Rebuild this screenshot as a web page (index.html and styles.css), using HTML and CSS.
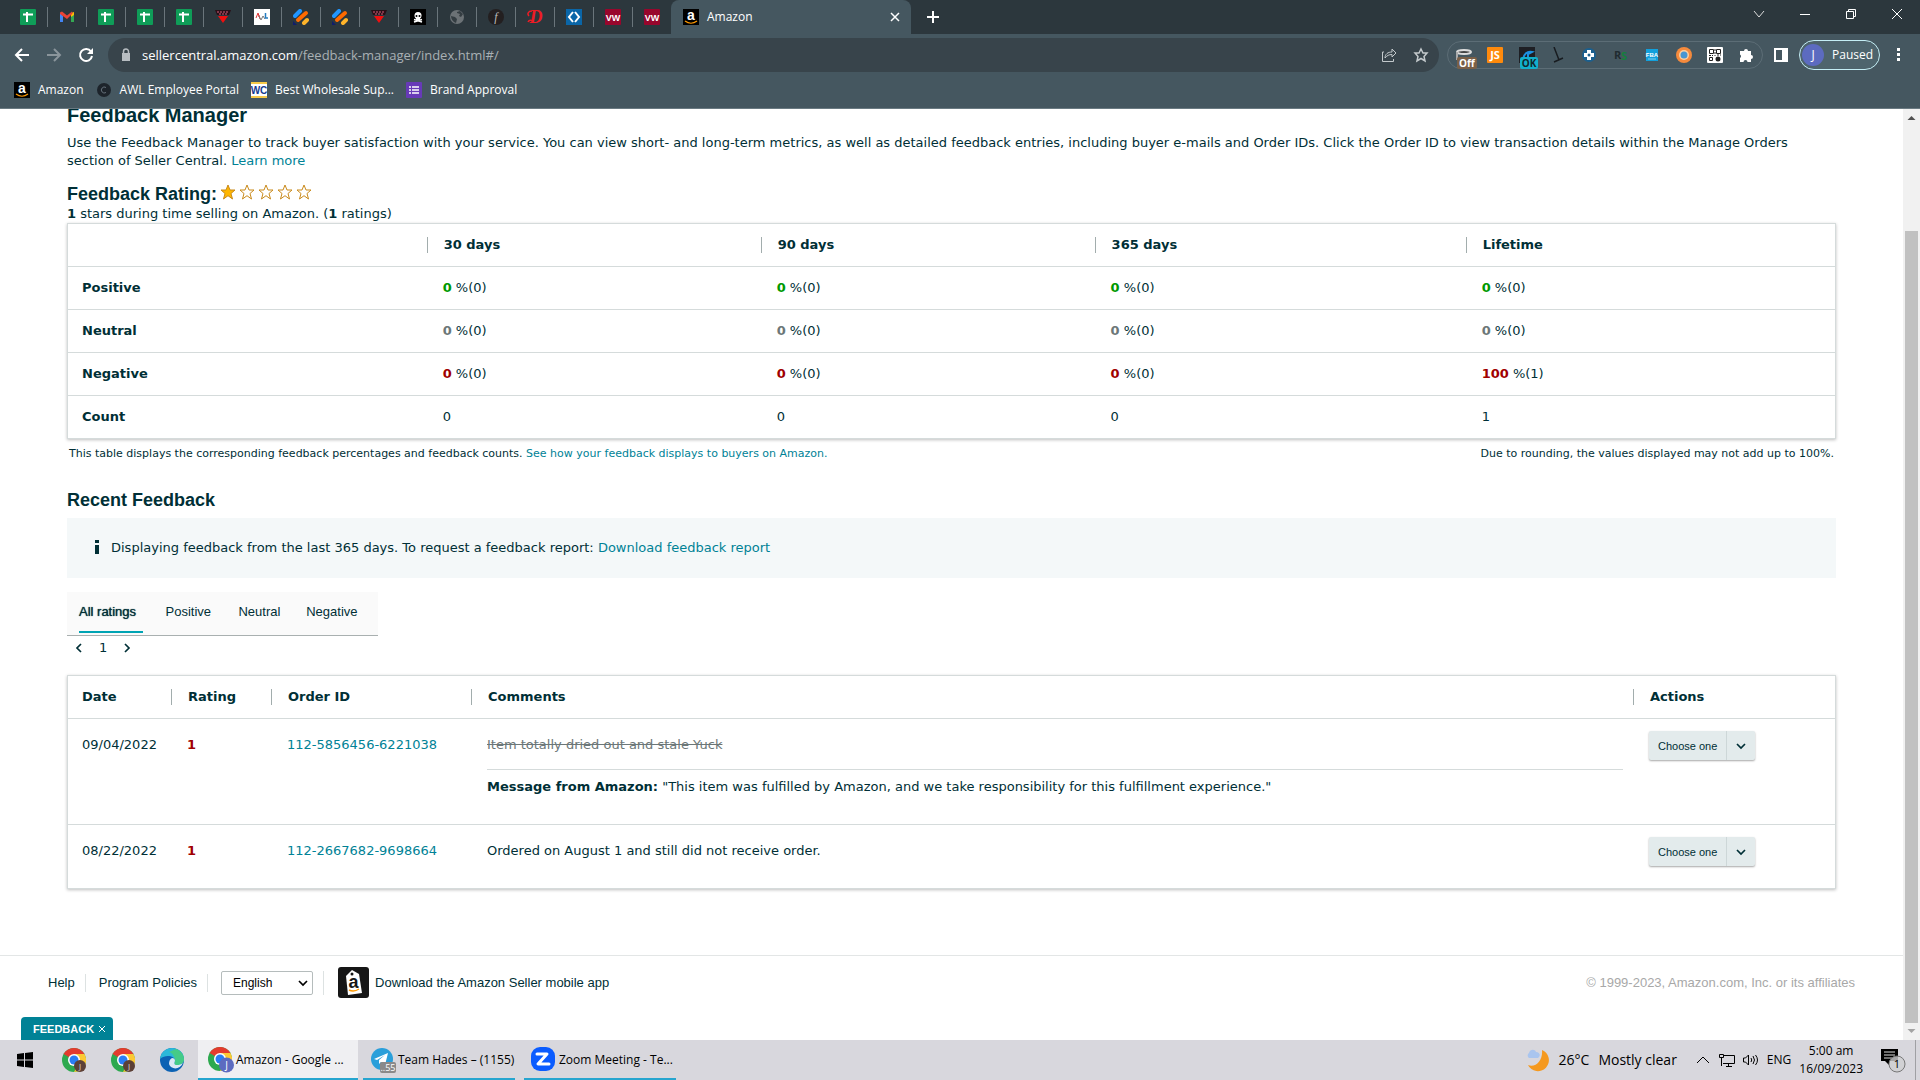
FILE: index.html
```html
<!DOCTYPE html>
<html lang="en">
<head>
  <meta charset="UTF-8" />
  <meta name="viewport" content="width=device-width, initial-scale=1.0" />
  <title>Amazon</title>
  <link rel="stylesheet" href="styles.css">
</head>
<body>
  <!-- shared icons -->
  <svg class="defs" aria-hidden="true">
    <symbol id="sheet" viewBox="0 0 16 16"><rect width="16" height="16" rx="1" fill="#0f9d58"/><path d="M3 5.500h10M7 3v10" stroke="#fff" stroke-width="2"/></symbol>
    <symbol id="vred" viewBox="0 0 16 16"><path d="M0 1h16l-2 5H2z" fill="#281018"/><path d="M2 3h12M4 5h8" stroke="#d85c78" stroke-dasharray="2 1"/><path d="M3 7h10l-5 7z" fill="#f01010"/></symbol>
    <symbol id="stripes" viewBox="0 0 16 16"><path d="M2 7l5-5" stroke="#2196ff" stroke-width="4" stroke-linecap="round"/><path d="M5 11l8-7" stroke="#ff6a00" stroke-width="4" stroke-linecap="round"/><path d="M11 14l3-3" stroke="#ffb42a" stroke-width="4" stroke-linecap="round"/><path d="M0 12l4 4H0z" fill="#101d6b"/></symbol>
    <symbol id="chrome" viewBox="0 0 24 24"><circle cx="12" cy="12" r="12" fill="#2da94f"/><path d="M12 12L1.600 6A12 12 0 0 1 22.400 6z" fill="#e33b2e"/><path d="M22.400 6A12 12 0 0 1 12 24l5-9-5-9z" fill="#fcc934"/><circle cx="12" cy="12" r="6" fill="#fff"/><circle cx="12" cy="12" r="4.500" fill="#2a7df4"/></symbol>
    <symbol id="star" viewBox="0 0 16 16"><path d="M8 1l2 5h5l-4 3.500L12.500 15 8 11.700 3.500 15 5 9.500 1 6h5z" stroke="#c98a1b"/></symbol>
    <symbol id="chev" viewBox="0 0 10 10"><path d="M1 3l4 4 4-4" fill="none" stroke="currentColor" stroke-width="1.700"/></symbol>
  </svg>

  <header class="browser">
    <div class="tabstrip">
      <div class="pinned">
        <span class="pin"><svg><use href="#sheet"/></svg></span>
        <span class="pin"><svg viewBox="0 0 16 16"><path d="M1 4v9h3V7z" fill="#4285f4"/><path d="M15 4v9h-3V7z" fill="#34a853"/><path d="M12 4l3-1v3l-3 2z" fill="#fbbc04"/><path d="M1 3.500l2-1 5 4 5-4 .5 2L8 10 1 5z" fill="#ea4335"/></svg></span>
        <span class="pin"><svg><use href="#sheet"/></svg></span>
        <span class="pin"><svg><use href="#sheet"/></svg></span>
        <span class="pin"><svg><use href="#sheet"/></svg></span>
        <span class="pin"><svg><use href="#vred"/></svg></span>
        <span class="pin"><svg viewBox="0 0 16 16"><rect width="16" height="16" fill="#fff"/><path d="M2 9l2-5 2 6M4 7h2" stroke="#d33" fill="none"/><path d="M5 7l2 4 2-4 2 3" stroke="#777" fill="none"/><path d="M11.500 4v5H14" stroke="#247cc0" stroke-width="1.500" fill="none"/></svg></span>
        <span class="pin"><svg><use href="#stripes"/></svg></span>
        <span class="pin"><svg><use href="#stripes"/></svg></span>
        <span class="pin"><svg><use href="#vred"/></svg></span>
        <span class="pin"><svg viewBox="0 0 16 16"><rect width="16" height="16" fill="#000"/><circle cx="8" cy="6.500" r="3.500" fill="#fff"/><path d="M6 8h4v3H6z" fill="#fff"/><path d="M4 10.500l8 2.500M12 10.500L4 13" stroke="#fff" stroke-width="1.500"/><circle cx="6.500" cy="7" r="1"/><circle cx="9.500" cy="7" r="1"/></svg></span>
        <span class="pin"><svg viewBox="0 0 16 16"><circle cx="8" cy="8" r="7" fill="#6c7276"/><path d="M2 7l4 1 2 2-1 4c-3-1-5-4-5-7zM8 3l3-1 3 3-2 3-2-1 1-2-3-1z" fill="#343d42"/></svg></span>
        <span class="pin"><svg viewBox="0 0 16 16"><circle cx="8" cy="8" r="8" fill="#231f20"/><text x="8" y="12" text-anchor="middle" font-family="Liberation Serif, serif" font-style="italic" font-size="12" fill="#bbb">f</text></svg></span>
        <span class="pin"><svg viewBox="0 0 16 16"><text x="9" y="14" text-anchor="middle" font-family="Liberation Serif, serif" font-style="italic" font-weight="700" font-size="18" fill="#ee1c25">D</text><path d="M5 2C1 2 0 5 2 7M1 13c1-2 3-2 5-1" stroke="#ee1c25" stroke-width="1.500" fill="none"/></svg></span>
        <span class="pin"><svg viewBox="0 0 16 16"><rect width="16" height="16" fill="#0a66a8"/><path d="M7 3L3 8l4 5M9 3l4 5-4 5" stroke="#fff" stroke-width="2" fill="none"/></svg></span>
        <span class="pin"><svg viewBox="0 0 16 16"><rect width="16" height="16" rx="1" fill="#98062c"/><text x="8" y="12" text-anchor="middle" font-family="Liberation Sans, sans-serif" font-weight="700" font-size="9" fill="#fff">VW</text></svg></span>
        <span class="pin"><svg viewBox="0 0 16 16"><rect width="16" height="16" rx="1" fill="#98062c"/><text x="8" y="12" text-anchor="middle" font-family="Liberation Sans, sans-serif" font-weight="700" font-size="9" fill="#fff">VW</text></svg></span>
      </div>
      <div class="tab">
        <svg viewBox="0 0 16 16"><rect width="16" height="16" fill="#000"/><text x="8" y="11" text-anchor="middle" font-family="Liberation Sans, sans-serif" font-weight="700" font-size="14" fill="#fff">a</text><path d="M2 12c4 3 8 3 12 0" stroke="#ff9900" stroke-width="1.200" fill="none"/></svg>
        <span class="tab-title">Amazon</span>
        <button class="icon-btn" aria-label="Close tab"><svg viewBox="0 0 16 16"><path d="M4 4l8 8M12 4l-8 8" stroke="#fff" stroke-width="1.500"/></svg></button>
      </div>
      <button class="icon-btn new-tab" aria-label="New tab"><svg viewBox="0 0 16 16"><path d="M8 2v12M2 8h12" stroke="#fff" stroke-width="2"/></svg></button>
      <div class="window-controls">
        <button class="icon-btn" aria-label="Search tabs"><svg viewBox="0 0 16 16"><path d="M3 5l5 6 5-6" stroke="#ddd" fill="none"/></svg></button>
        <button class="icon-btn" aria-label="Minimize"><svg viewBox="0 0 16 16"><path d="M3 8.500h10" stroke="#fff"/></svg></button>
        <button class="icon-btn" aria-label="Restore"><svg viewBox="0 0 16 16"><path d="M3.500 5.500h7v7h-7zM5.500 5V3.500h7v7H11" stroke="#fff" fill="none"/></svg></button>
        <button class="icon-btn" aria-label="Close"><svg viewBox="0 0 16 16"><path d="M3 3l10 10M13 3L3 13" stroke="#fff"/></svg></button>
      </div>
    </div>

    <div class="toolbar">
      <div class="nav">
        <button class="icon-btn" aria-label="Back"><svg viewBox="0 0 16 16"><path d="M15 8H2M8 2L2 8l6 6" stroke="#fff" stroke-width="2" fill="none"/></svg></button>
        <button class="icon-btn" aria-label="Forward"><svg viewBox="0 0 16 16"><path d="M1 8h13M8 2l6 6-6 6" stroke="#8a959b" stroke-width="2" fill="none"/></svg></button>
        <button class="icon-btn" aria-label="Reload"><svg viewBox="0 0 16 16"><path d="M13 4.500A6 6 0 1 0 14 9" stroke="#fff" stroke-width="2" fill="none"/><path d="M15 1v6H9z" fill="#fff"/></svg></button>
      </div>
      <div class="omnibox">
        <svg viewBox="0 0 16 16"><path d="M4 6h8v8H4z" fill="#b7bdc1"/><path d="M5.500 7V4.500a2.500 2.500 0 0 1 5 0V7" stroke="#b7bdc1" fill="none" stroke-width="1.500"/></svg>
        <span class="url">sellercentral.amazon.com<span class="path">/feedback-manager/index.html#/</span></span>
        <button class="icon-btn" aria-label="Share"><svg viewBox="0 0 16 16"><path d="M3 5H1.500v9.500h11V12M4 11c0-4 3-6 7-6V2l4 4-4 4V7.500C8 7.500 6 8.500 4 11z" stroke="#c3c9cc" fill="none"/></svg></button>
        <button class="icon-btn" aria-label="Bookmark"><svg viewBox="0 0 16 16"><path d="M8 2l2 4h4l-3 3.500 1 4.500-4-2.500L4 14l1-4.500L2 6h4z" stroke="#c3c9cc" stroke-width="1.500" fill="none"/></svg></button>
      </div>
      <div class="extensions">
        <span class="ext"><svg viewBox="0 0 16 16"><ellipse cx="8" cy="5" rx="7" ry="2" stroke="#ddd" stroke-width="2" fill="#444"/><path d="M1 5v8" stroke="#aaa" stroke-width="2"/></svg><b class="badge badge-off">Off</b></span>
        <span class="ext"><svg viewBox="0 0 16 16"><rect width="16" height="16" rx="1" fill="#ff8a0c"/><text x="8" y="12" text-anchor="middle" font-family="Open Sans, sans-serif" font-weight="700" font-size="11" fill="#fff">JS</text></svg></span>
        <span class="ext"><svg viewBox="0 0 16 16"><rect width="16" height="16" fill="#1e1f24"/><path d="M4 12c1-5 4-8 9-7l-4 2v3" stroke="#1d8fe0" stroke-width="2" fill="none"/></svg><b class="badge badge-ok">OK</b></span>
        <span class="ext"><svg viewBox="0 0 16 16"><path d="M4 0l5 13M4 15l9-4" stroke="#181c20" stroke-width="1.500"/></svg></span>
        <span class="ext"><svg viewBox="0 0 16 16"><circle cx="8" cy="8" r="7" fill="#1b5f8e"/><path d="M8 3v10M3 8h10" stroke="#fff" stroke-width="4"/><circle cx="8" cy="8" r="1.500" fill="#1b5f8e"/></svg></span>
        <span class="ext"><svg viewBox="0 0 16 16"><text x="1" y="12" font-family="Open Sans, sans-serif" font-weight="700" font-size="11" fill="#202b30">R</text><text x="8" y="13" font-family="Open Sans, sans-serif" font-weight="700" font-size="11" fill="#14803c">S</text></svg></span>
        <span class="ext"><svg viewBox="0 0 16 16"><path d="M2 2h12v12H2z" fill="#12a0dc"/><text x="8" y="10" text-anchor="middle" font-family="Liberation Sans, sans-serif" font-weight="700" font-size="6" fill="#fff">FBA</text><path d="M4 12h8" stroke="#7fd0f0"/></svg></span>
        <span class="ext"><svg viewBox="0 0 16 16"><circle cx="8" cy="8" r="8" fill="#f58a3c"/><circle cx="8" cy="8" r="5" fill="#fbd0a2"/><circle cx="8" cy="8" r="3.500" fill="#4796d2"/></svg></span>
        <span class="ext"><svg viewBox="0 0 16 16"><rect width="16" height="16" rx="1" fill="#fff"/><path d="M2.500 2.500h4v4h-4zM9.500 2.500h4v4h-4zM2.500 10.500h3v3h-3z" stroke="#222" fill="none"/><path d="M8 2v7M2 8.500h4M10 8h4" stroke="#222" stroke-dasharray="2 1"/><circle cx="11" cy="12" r="2.500" fill="#222"/></svg></span>
        <span class="ext"><svg viewBox="0 0 16 16"><path d="M2 4h4a2 2 0 0 1 4 0h3v4a2 2 0 0 1 0 4v3H9.500a2 2 0 0 0-4 0H2v-4a2 2 0 0 0 0-3.500z" fill="#fff"/></svg></span>
      </div>
      <button class="icon-btn side-panel" aria-label="Side panel"><svg viewBox="0 0 16 16"><path d="M1 1h14v14H1zM3 3v10h6V3z" fill="#fff" fill-rule="evenodd"/></svg></button>
      <button class="profile"><span class="avatar">J</span>Paused</button>
      <button class="icon-btn menu" aria-label="Menu"><svg viewBox="0 0 16 16"><path d="M7 1h3v3H7zM7 6h3v3H7zM7 11h3v3H7z" fill="#fff"/></svg></button>
    </div>

    <nav class="bookmarks">
      <a href="#"><svg viewBox="0 0 16 16"><rect width="16" height="16" fill="#000"/><text x="8" y="11" text-anchor="middle" font-family="Liberation Sans, sans-serif" font-weight="700" font-size="14" fill="#fff">a</text><path d="M2 12c4 3 8 3 12 0" stroke="#ff9900" stroke-width="1.200" fill="none"/></svg>Amazon</a>
      <a href="#"><svg viewBox="0 0 16 16"><circle cx="8" cy="8" r="7" fill="#1d242b"/><path d="M10 5.500a3 3 0 1 0 0 5" stroke="#65707a" fill="none"/></svg>AWL Employee Portal</a>
      <a href="#"><svg viewBox="0 0 16 16"><rect width="16" height="16" fill="#fff"/><path d="M0 1h16M0 15h16" stroke="#f7c948" stroke-width="2"/><text x="8" y="12" text-anchor="middle" font-family="Liberation Sans, sans-serif" font-weight="700" font-size="10" fill="#173a8f">WC</text></svg>Best Wholesale Sup...</a>
      <a href="#"><svg viewBox="0 0 16 16"><rect width="16" height="16" rx="1" fill="#673ab7"/><path d="M3 5h2M6 5h7M3 8h2M6 8h7M3 11h2M6 11h7" stroke="#fff" stroke-width="1.500"/></svg>Brand Approval</a>
    </nav>
  </header>

  <div class="viewport">
    <div class="page">
      <main class="content">
        <h1>Feedback Manager</h1>
        <p class="intro">Use the Feedback Manager to track buyer satisfaction with your service. You can view short- and long-term metrics, as well as detailed feedback entries, including buyer e-mails and Order IDs. Click the Order ID to view transaction details within the Manage Orders section of Seller Central. <a href="#">Learn more</a></p>

        <div class="rating">
          <h2>Feedback Rating:</h2>
          <span class="stars" role="img" aria-label="1 out of 5 stars">
            <svg class="full"><use href="#star"/></svg><svg><use href="#star"/></svg><svg><use href="#star"/></svg><svg><use href="#star"/></svg><svg><use href="#star"/></svg>
          </span>
        </div>
        <p class="summary"><b>1</b> stars during time selling on Amazon. (<b>1</b> ratings)</p>

        <table class="grid metrics">
          <colgroup><col class="m-label"><col class="m-30"><col class="m-90"><col class="m-365"><col></colgroup>
          <thead>
            <tr><td></td><th><span>30 days</span></th><th><span>90 days</span></th><th><span>365 days</span></th><th><span>Lifetime</span></th></tr>
          </thead>
          <tbody>
            <tr><th>Positive</th><td><b class="pos">0</b> %(0)</td><td><b class="pos">0</b> %(0)</td><td><b class="pos">0</b> %(0)</td><td><b class="pos">0</b> %(0)</td></tr>
            <tr><th>Neutral</th><td><b class="neu">0</b> %(0)</td><td><b class="neu">0</b> %(0)</td><td><b class="neu">0</b> %(0)</td><td><b class="neu">0</b> %(0)</td></tr>
            <tr><th>Negative</th><td><b class="neg">0</b> %(0)</td><td><b class="neg">0</b> %(0)</td><td><b class="neg">0</b> %(0)</td><td><b class="neg">100</b> %(1)</td></tr>
            <tr><th>Count</th><td>0</td><td>0</td><td>0</td><td>1</td></tr>
          </tbody>
        </table>
        <div class="notes">
          <span>This table displays the corresponding feedback percentages and feedback counts. <a href="#">See how your feedback displays to buyers on Amazon.</a></span>
          <span>Due to rounding, the values displayed may not add up to 100%.</span>
        </div>

        <h2 class="recent">Recent Feedback</h2>
        <div class="info">
          <svg viewBox="0 0 6 16"><path d="M1 0h4v3H1zM1 5h4v9H1z" fill="#002f36"/></svg>
          <span>Displaying feedback from the last 365 days. To request a feedback report: <a href="#">Download feedback report</a></span>
        </div>

        <div class="filters" role="tablist">
          <button class="filter active" role="tab" aria-selected="true" data-label="All ratings">All ratings</button>
          <button class="filter" role="tab" data-label="Positive">Positive</button>
          <button class="filter" role="tab" data-label="Neutral">Neutral</button>
          <button class="filter" role="tab" data-label="Negative">Negative</button>
        </div>
        <div class="pager">
          <button aria-label="Previous page"><svg class="prev"><use href="#chev"/></svg></button>
          <span>1</span>
          <button aria-label="Next page"><svg class="next"><use href="#chev"/></svg></button>
        </div>

        <table class="grid feedback">
          <colgroup><col class="f-date"><col class="f-rating"><col class="f-order"><col><col class="f-actions"></colgroup>
          <thead>
            <tr><th>Date</th><th><span>Rating</span></th><th><span>Order ID</span></th><th><span>Comments</span></th><th><span>Actions</span></th></tr>
          </thead>
          <tbody>
            <tr>
              <td>09/04/2022</td>
              <td><b class="neg">1</b></td>
              <td><a href="#">112-5856456-6221038</a></td>
              <td>
                <s>Item totally dried out and stale Yuck</s>
                <p class="message"><b>Message from Amazon:</b> "This item was fulfilled by Amazon, and we take responsibility for this fulfillment experience."</p>
              </td>
              <td class="actions"><div class="split"><button>Choose one</button><button class="caret" aria-label="More actions"><svg><use href="#chev"/></svg></button></div></td>
            </tr>
            <tr>
              <td>08/22/2022</td>
              <td><b class="neg">1</b></td>
              <td><a href="#">112-2667682-9698664</a></td>
              <td>Ordered on August 1 and still did not receive order.</td>
              <td class="actions"><div class="split"><button>Choose one</button><button class="caret" aria-label="More actions"><svg><use href="#chev"/></svg></button></div></td>
            </tr>
          </tbody>
        </table>
      </main>

      <footer class="footer">
        <a href="#">Help</a>
        <a href="#">Program Policies</a>
        <span class="language"><select aria-label="Language"><option>English</option></select><svg><use href="#chev"/></svg></span>
        <a href="#" class="app">
          <svg viewBox="0 0 32 32"><rect width="31" height="31" rx="3" fill="#161616"/><path d="M8 9l6-6 7 4 3 19-14 2z" fill="#fff"/><circle cx="14" cy="7" r="1.500" fill="#161616"/><text x="15.500" y="21" text-anchor="middle" font-family="Liberation Sans, sans-serif" font-weight="700" font-size="18" fill="#161616">a</text><path d="M11 23c4 2 7 1 10-1" stroke="#ff9900" stroke-width="1.500" fill="none"/></svg>
          Download the Amazon Seller mobile app
        </a>
        <span class="copyright">© 1999-2023, Amazon.com, Inc. or its affiliates</span>
      </footer>
      <button class="feedback-tab">FEEDBACK <svg viewBox="0 0 8 8"><path d="M1 1l6 6M7 1L1 7" stroke="#fff"/></svg></button>
    </div>

    <div class="scrollbar" aria-hidden="true">
      <svg viewBox="0 0 17 17"><path d="M8.500 7l4 4h-8z" fill="#505050"/></svg>
      <div class="thumb"></div>
      <svg viewBox="0 0 17 17"><path d="M8.500 10l4-4h-8z" fill="#a3a3a3"/></svg>
    </div>
  </div>

  <div class="taskbar">
    <button class="launch" aria-label="Start"><svg class="start" viewBox="0 0 16 16"><path d="M0 2l7-1v6.500H0zM8 1l8-1v7.500H8zM0 8.500h7V15l-7-1zM8 8.500h8V16l-8-1z"/></svg></button>
    <button class="launch" aria-label="Chrome"><svg viewBox="0 0 24 24"><use href="#chrome"/><circle cx="18" cy="18" r="6" fill="#5c4037"/><text x="18" y="21" text-anchor="middle" font-family="Open Sans, sans-serif" font-size="8" fill="#ddd">J</text></svg></button>
    <button class="launch" aria-label="Chrome"><svg viewBox="0 0 24 24"><use href="#chrome"/><circle cx="18" cy="18" r="6" fill="#5c4037"/><text x="18" y="21" text-anchor="middle" font-family="Open Sans, sans-serif" font-size="8" fill="#ddd">J</text></svg></button>
    <button class="launch" aria-label="Edge"><svg viewBox="0 0 24 24"><circle cx="12" cy="12" r="12" fill="#0c62b4"/><path d="M0 11C1 4 6 0 12 0c7 0 12 5 12 11 0 4-3 6-7 6-3 0-3-2-2-4 0-5-9-7-15-2z" fill="#2bb8d9"/><path d="M16 1c5 2 8 6 8 10 0 4-3 6-7 6-3 0-3-2-2-4 0-4-2-8-6-9z" fill="#4fd26b" opacity=".75"/><path d="M15 13c-1 2-1 4 2 4 2 0 4-.5 6-2-3 7-12 7-14 1 0-3 1-5 3-6 2 0 3 1 3 3z" fill="#dce8f5"/></svg></button>
    <button class="task current"><svg viewBox="0 0 26 26"><use href="#chrome" width="24" height="24"/><circle cx="18.500" cy="18" r="7.500" fill="#5c6bc0"/><text x="18.500" y="22" text-anchor="middle" font-family="Open Sans, sans-serif" font-size="10" fill="#fff">J</text></svg><span>Amazon - Google ...</span></button>
    <button class="task"><svg viewBox="0 0 26 26"><circle cx="12" cy="12" r="11" fill="#2a9fda"/><path d="M4 12l14-6-3 12-4-3-2 2v-4l6-5-8 5z" fill="#fff"/><rect x="10" y="15" width="16" height="11" rx="2" fill="#8a8a8a"/><text x="18" y="24" text-anchor="middle" font-family="Open Sans, sans-serif" font-size="9" fill="#fff">..55</text></svg><span>Team Hades – (1155)</span></button>
    <button class="task"><svg viewBox="0 0 26 26"><rect width="24" height="24" rx="9" fill="#0b5cff"/><path d="M6 7h10L7 17h11" stroke="#fff" stroke-width="3" stroke-linejoin="round" stroke-linecap="round" fill="none"/></svg><span>Zoom Meeting - Te...</span></button>
    <div class="tray">
      <div class="weather">
        <svg viewBox="0 0 24 24"><path d="M16 2a11 11 0 1 1-14 15c8 3 15-5 14-15z" fill="#f5991f"/><path d="M3 10a3 3 0 0 1 0-5c1-4 6-4 7-1 4 0 5 4 2 6z" fill="#a9c5ef"/></svg>
        <span>26°C</span><span>Mostly clear</span>
      </div>
      <svg viewBox="0 0 16 16"><path d="M2 11l6-6 6 6" stroke="#000" fill="none"/></svg>
      <svg viewBox="0 0 16 16"><path d="M4 3.500h11.500v8H4M7 14.500h6M9.500 12v2M.5 2.500h4v3h-4zM2.500 6v8" stroke="#000" fill="none"/></svg>
      <svg viewBox="0 0 16 16"><path d="M.5 6v4h2l3 3V3l-3 3zM8 6q1.500 2 0 4M10 4q3 4 0 8M12.500 3q4 5 0 10" stroke="#000" fill="none"/></svg>
      <span>ENG</span>
      <div class="clock"><span>5:00 am</span><span>16/09/2023</span></div>
      <svg class="notify" viewBox="0 0 26 26"><path d="M1 2h17v12H9v4l-4-4H1z"/><path d="M4 5h11M4 8h11M4 11h8" stroke="#ddd"/><circle cx="17" cy="17" r="8" fill="#cfcfd2" fill-opacity=".8" stroke="#777"/><text x="17" y="21" text-anchor="middle" font-family="Open Sans, sans-serif" font-size="11">1</text></svg>
    </div>
  </div>
</body>
</html>
```
FILE: styles.css
```css
:root {
  --text: #002f36;
  --link: #008296;
  --border: #d5dbdb;
  --chrome: #455760;
  --ui: "Open Sans", "Noto Sans", sans-serif;
  --arial: "Liberation Sans", Arial, sans-serif;
  --verdana: "DejaVu Sans", Verdana, sans-serif;
}
* { box-sizing: border-box; }
body {
  margin: 0;
  height: 100vh;
  display: flex;
  flex-direction: column;
  overflow: hidden;
  font: 13px/18px var(--verdana);
  color: var(--text);
}
a { color: var(--link); text-decoration: none; }
button {
  margin: 0;
  padding: 0;
  border: none;
  background: none;
  color: inherit;
  font: inherit;
  cursor: pointer;
}
svg { width: 16px; height: 16px; flex: none; display: block; }
.defs { position: absolute; width: 0; height: 0; }
h1, h2, p { margin: 0; }
h1, h2 { font-family: var(--arial); }
h1 { font-size: 20px; line-height: 20px; }
h2 { font-size: 18px; line-height: 20px; }

/* browser */
.browser {
  flex: none;
  background: var(--chrome);
  border-bottom: 1px solid #6a7a82;
  font: 12px/16px var(--ui);
  color: #fff;
}
.icon-btn { display: flex; align-items: center; justify-content: center; width: 32px; height: 28px; }
.tabstrip { display: flex; height: 34px; background: #2c373d; }
.pinned { display: flex; padding-left: 9px; padding-bottom: 6px; }
.pinned, .tab { padding-bottom: 0; }
.pin {
  display: flex;
  align-items: center;
  width: 39px;
  padding-left: 11px;
  background: linear-gradient(#6a757b, #6a757b) right 7px / 1px 20px no-repeat;
}
.pin:last-child { background: none; }
.tab {
  display: flex;
  align-items: center;
  gap: 8px;
  width: 240px;
  margin-left: -1px;
  padding-left: 12px;
  border-radius: 8px 8px 0 0;
  background: var(--chrome);
}
.tab-title { flex: 1; }
.new-tab { width: 44px; height: 34px; }
.window-controls { display: flex; margin-left: auto; }
.window-controls .icon-btn { width: 46px; }
.toolbar { display: flex; align-items: center; height: 42px; padding: 0 4px 0 6px; }
.nav { display: flex; }
.omnibox {
  flex: 1;
  display: flex;
  align-items: center;
  height: 34px;
  margin-left: 6px;
  padding: 0 2px 0 10px;
  border-radius: 17px;
  background: #38444b;
}
.url { flex: 1; margin-left: 8px; font-size: 13px; }
.path { color: #a9b0b4; }
.extensions {
  display: flex;
  width: 316px;
  height: 28px;
  margin-left: 8px;
  border: 1px solid #5c6d76;
  border-radius: 14px;
}
.ext { position: relative; flex: 1; display: flex; align-items: center; justify-content: center; }
.badge {
  position: absolute;
  left: 9px;
  top: 15px;
  padding: 0 2px;
  border-radius: 2px;
  font-size: 10px;
  line-height: 12px;
}
.badge-off { background: #7a6048; }
.badge-ok { background: #12b0cc; color: #10282e; }
.side-panel, .menu { width: 36px; }
.profile {
  display: flex;
  align-items: center;
  gap: 8px;
  width: 81px;
  height: 30px;
  padding-left: 2px;
  border: 1px solid #c4eef5;
  border-radius: 15px;
  background: #4e646d;
}
.avatar { width: 22px; height: 22px; border-radius: 50%; background: #5c6bc0; line-height: 22px; }
.bookmarks { display: flex; gap: 12px; height: 32px; padding: 6px 14px 0; }
.bookmarks a { display: flex; height: 16px; gap: 8px; color: #fff; }

/* page */
.viewport { flex: 1; display: flex; min-height: 0; overflow: hidden; }
.page { flex: 1; display: flex; flex-direction: column; background: #fff; }
.content { padding: 0 67px; }
.content h1 { margin-top: -4px; }
.intro { margin-top: 9px; }
.rating { display: flex; align-items: flex-start; margin-top: 14px; }
.stars { display: flex; gap: 3px; margin-left: 3px; }
.stars svg { fill: #fff; }
.stars .full { fill: #ffb700; }
.summary { padding-top: 1px; }

.grid {
  width: 100%;
  table-layout: fixed;
  border-collapse: separate;
  border-spacing: 0;
  border: 1px solid var(--border);
  box-shadow: 0 1px 3px rgba(0, 0, 0, 0.25);
}
.grid th, .grid td {
  height: 43px;
  padding: 0 0 0 16px;
  border-bottom: 1px solid var(--border);
  text-align: left;
}
.grid tbody tr:last-child th, .grid tbody tr:last-child td { border-bottom: none; }
.grid th:first-child, .grid td:first-child { padding-left: 14px; }
.grid th span { display: inline-block; margin-left: -16px; padding-left: 16px; border-left: 1px solid #a2adad; line-height: 16px; }
.m-label { width: 20.3%; }
.m-30, .m-90 { width: 18.9%; }
.m-365 { width: 21%; }
.pos { color: #090; }
.neu { color: #6c7778; }
.neg { color: #a00000; }
.metrics tbody tr:last-child > * { height: 42px; }
.notes { display: flex; justify-content: space-between; padding: 6px 2px 0; font-size: 11px; }

.recent { margin-top: 27px; }
.info {
  display: flex;
  align-items: center;
  gap: 11px;
  height: 60px;
  margin-top: 8px;
  padding-left: 27px;
  background: #f4f8f9;
}
.info svg { width: 6px; }
.filters {
  display: inline-flex;
  gap: 23px;
  height: 44px;
  margin-top: 14px;
  padding: 0 18px 0 12px;
  border-bottom: 1px solid #a9b0b0;
  background: #fafafa;
  vertical-align: top;
  font-family: var(--arial);
}
.filter { display: grid; align-content: center; justify-items: start; height: 41px; border-bottom: 2px solid transparent; }
.filter::after { content: attr(data-label); height: 0; overflow: hidden; visibility: hidden; font-weight: 700; }
.filter.active { border-color: #00a4b4; text-shadow: 0 0 1px var(--text); }
.pager { display: flex; align-items: center; gap: 15px; height: 24px; padding-left: 7px; }
.pager svg { width: 10px; height: 10px; }
.prev { transform: rotate(90deg); }
.next { transform: rotate(-90deg); }

.feedback { margin-top: 15px; }
.f-date { width: 103px; }
.f-rating { width: 100px; }
.f-order { width: 200px; }
.f-actions { width: 202px; }
.feedback tbody td { height: 63px; padding-top: 17px; padding-right: 10px; vertical-align: top; }
.feedback tbody tr:first-child td { height: 106px; }
.feedback tbody td.actions { padding-top: 12px; }
.feedback td:first-child { padding-right: 0; }
s { color: #6c7778; }
.message { margin-top: 15px; padding-top: 8px; border-top: 1px solid var(--border); }
.split {
  display: inline-flex;
  height: 29px;
  border-radius: 2px;
  background: #e3ebec;
  box-shadow: 0 1px 2px rgba(0, 0, 0, 0.35);
  font: 11px/28px var(--arial);
}
.split button { padding: 0 9px; }
.split .caret { border-left: 1px solid #cdd7d8; }
.caret svg { width: 10px; height: 10px; }

/* footer */
.footer {
  display: flex;
  align-items: center;
  margin-top: auto;
  height: 54px;
  padding: 0 48px;
  border-top: 1px solid #e3e6e6;
  font-family: var(--arial);
}
.footer a { padding-right: 10px; margin-right: 13px; border-right: 1px solid #dde2e2; color: var(--text); }
.language { position: relative; padding-right: 10px; border-right: 1px solid #dde2e2; }
.language select {
  appearance: none;
  width: 92px;
  height: 24px;
  padding: 0 11px;
  border: 1px solid #b5bcbc;
  border-radius: 2px;
  background: #fff;
  color: #000;
  font: inherit;
  font-size: 12px;
}
.language svg { position: absolute; right: 15px; top: 7px; width: 10px; height: 10px; color: #000; }
.footer .app { display: flex; align-items: center; gap: 5px; margin-left: 14px; border: none; }
.app svg { width: 32px; height: 32px; }
.copyright { margin-left: auto; color: #a8a8a8; }
.feedback-tab {
  display: flex;
  align-items: center;
  gap: 4px;
  align-self: flex-start;
  height: 23px;
  margin: 8px 0 0 21px;
  padding: 0 7px 0 12px;
  border-radius: 4px 4px 0 0;
  background: #008296;
  color: #fff;
  font: bold 11px var(--arial);
}
.feedback-tab svg { width: 8px; height: 8px; }
.scrollbar { display: flex; flex-direction: column; width: 17px; background: #f1f1f1; }
.scrollbar svg { width: 17px; height: 17px; }
.thumb { flex: 1; margin: 105px 2px 0; background: #c1c1c1; }

/* taskbar */
.taskbar {
  flex: none;
  display: flex;
  height: 40px;
  background: #d8d7dd;
  color: #000;
  font: 12px/16px var(--ui);
}
.launch { display: flex; align-items: center; justify-content: center; width: 49px; }
.launch svg { width: 24px; height: 24px; }
.launch .start { width: 16px; height: 16px; }
.task { display: flex; align-items: center; gap: 2px; width: 152px; margin-right: 9px; padding: 2px 0 0 7px; border-bottom: 2px solid #26a5cf; white-space: nowrap; }
.task svg { width: 26px; height: 26px; }
.task.current { width: 160px; margin: 0 5px 0 2px; padding-left: 10px; background: #efeff2; }
.tray { display: flex; align-items: center; gap: 8px; margin-left: auto; margin-right: 4px; padding-right: 9px; border-right: 1px solid #a0a0a4; }
.weather { display: flex; align-items: center; gap: 9px; margin-right: 10px; font-size: 14px; }
.weather svg { width: 24px; height: 24px; }
.clock { display: flex; flex-direction: column; align-items: center; margin-right: 9px; line-height: 18px; }
.tray .notify { width: 26px; height: 26px; }
```
